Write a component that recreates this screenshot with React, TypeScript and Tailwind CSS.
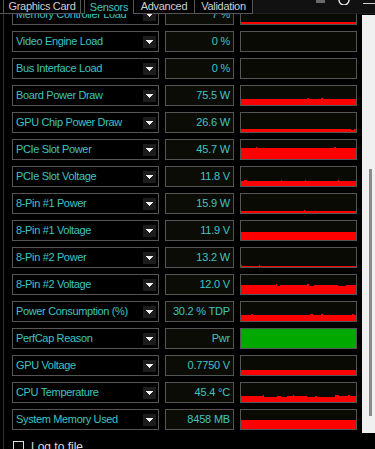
import React from "react";

type Row = {
  label: string;
  value: string;
  graph?: number[];
  green?: boolean;
};

const W = 115;
const H = 19;

function rng(seed: number) {
  let a = seed;
  return () => {
    a |= 0;
    a = (a + 0x6d2b79f5) | 0;
    let t = Math.imul(a ^ (a >>> 15), 1 | a);
    t = (t + Math.imul(t ^ (t >>> 7), 61 | t)) ^ t;
    return ((t ^ (t >>> 14)) >>> 0) / 4294967296;
  };
}

// one sample per pixel column, grouped into short runs
function series(
  seed: number,
  base: number,
  spikeP = 0,
  spikeH = 1,
  dipP = 0,
  dipH = 1,
  run = 4
): number[] {
  const r = rng(seed);
  const out: number[] = [];
  while (out.length < W) {
    const v = r();
    let h = base;
    let w = 1 + Math.floor(r() * run);
    if (v < spikeP) {
      h = base + 1 + Math.floor(r() * spikeH);
      w = 1 + Math.floor(r() * 2);
    } else if (v < spikeP + dipP) {
      h = base - 1 - Math.floor(r() * dipH);
    }
    for (let k = 0; k < w && out.length < W; k++) out.push(Math.max(0, h));
  }
  return out;
}

const gpuChip = series(7, 3);
gpuChip[110] = 2;
gpuChip[111] = 2;
gpuChip[112] = 2;

const rows: Row[] = [
  { label: "Memory Controller Load", value: "7 %", graph: series(1, 2) },
  { label: "Video Engine Load", value: "0 %" },
  { label: "Bus Interface Load", value: "0 %" },
  { label: "Board Power Draw", value: "75.5 W", graph: series(3, 6, 0.12, 1, 0, 1, 8) },
  { label: "GPU Chip Power Draw", value: "26.6 W", graph: gpuChip },
  { label: "PCIe Slot Power", value: "45.7 W", graph: series(11, 11, 0.12, 1, 0.05, 1, 8) },
  { label: "PCIe Slot Voltage", value: "11.8 V", graph: series(13, 5, 0.12, 1, 0, 1, 8) },
  { label: "8-Pin #1 Power", value: "15.9 W", graph: series(17, 2, 0.08, 1, 0, 1, 10) },
  { label: "8-Pin #1 Voltage", value: "11.9 V", graph: series(19, 8, 0.03, 1, 0.02, 1, 12) },
  { label: "8-Pin #2 Power", value: "13.2 W", graph: series(23, 1, 0.1, 1, 0, 1, 10) },
  { label: "8-Pin #2 Voltage", value: "12.0 V", graph: series(29, 9, 0.12, 1, 0.08, 1, 8) },
  { label: "Power Consumption (%)", value: "30.2 % TDP", graph: series(31, 6, 0.15, 1, 0, 1, 6) },
  { label: "PerfCap Reason", value: "Pwr", green: true },
  { label: "GPU Voltage", value: "0.7750 V", graph: series(37, 5) },
  { label: "CPU Temperature", value: "45.4 °C", graph: series(41, 6, 0.15, 1, 0.2, 1, 10) },
  { label: "System Memory Used", value: "8458 MB", graph: series(43, 9) },
];

function Graph({ data, green }: { data?: number[]; green?: boolean }) {
  if (green) return <div className="h-full w-full bg-[#00a800]" />;
  if (!data) return null;
  let d = `M0 ${H}`;
  data.forEach((h, i) => {
    d += ` L${i} ${H - h} L${i + 1} ${H - h}`;
  });
  d += ` L${W} ${H} Z`;
  return (
    <svg width={W} height={H} viewBox={`0 0 ${W} ${H}`} shapeRendering="crispEdges" className="block">
      <path d={d} fill="#ff0000" />
    </svg>
  );
}

function Arrow() {
  return (
    <div className="flex h-[12px] w-[13px] items-center justify-center bg-[#1c1c1c]">
      <svg width="7" height="4" viewBox="0 0 7 4" shapeRendering="crispEdges">
        <path d="M0 0 H7 L3.5 4 Z" fill="#f2f2f2" />
      </svg>
    </div>
  );
}

function SensorRow({ row }: { row: Row }) {
  return (
    <div className="flex h-[21px] gap-[6px]">
      <div className="flex w-[147px] items-center justify-between border border-[#555] bg-black pl-[3px] pr-[2px]">
        <span className="whitespace-nowrap text-[11px] tracking-[-0.35px] text-[#3fc3c3]">{row.label}</span>
        <Arrow />
      </div>
      <div className="flex w-[69px] items-center justify-end border border-[#555] bg-[#0c0c06] pr-[3px]">
        <span className="whitespace-nowrap text-[11px] tracking-[-0.2px] text-[#3fc3c3]">{row.value}</span>
      </div>
      <div className="w-[117px] overflow-hidden border border-[#555] bg-[#0a0a04]">
        <Graph data={row.graph} green={row.green} />
      </div>
    </div>
  );
}

function Tab({ label, active, className }: { label: string; active?: boolean; className: string }) {
  return (
    <div
      className={`flex h-full items-end justify-center border-r border-[#555] pb-[2px] text-[11px] leading-[11px] tracking-[-0.3px] ${
        active ? "bg-black text-[#3fc3c3]" : "border-b bg-black text-[#d0d0d0]"
      } ${className}`}
    >
      <span className="-mb-[1px] whitespace-nowrap">{label}</span>
    </div>
  );
}

export default function App() {
  return (
    <div className="h-[449px] w-[375px] overflow-hidden bg-black font-['Liberation_Sans',Arial,sans-serif]">
      {/* tab strip */}
      <div className="flex h-[14px]">
        <div className="w-[3px] border-b border-[#555]" />
        <Tab label="Graphics Card" className="w-[78px] border-l" />
        <div className="w-[3px] border-b border-[#555]" />
        <Tab label="Sensors" active className="w-[50px] border-l" />
        <Tab label="Advanced" className="w-[61px]" />
        <Tab label="Validation" className="w-[58px]" />
        <div className="flex flex-1 items-start border-b border-[#1e1e1e] bg-[#111]">
          <div className="ml-[63px] h-[3px] w-[9px] bg-[#6a6a6a]" />
          <svg width="12" height="5" viewBox="0 0 12 5" className="ml-[13px]">
            <path d="M1 0 A5 5 0 0 0 11 0" fill="none" stroke="#e0e0e0" strokeWidth="1.5" />
          </svg>
          <div className="ml-[13px] mt-[3px] h-[1px] flex-1 bg-[#d0d0d0]" />
        </div>
      </div>

      <div className="flex h-[435px]">
        <div className="w-[3px]" />
        <div className="w-[1px] bg-[#3a2c2c]" />
        <div className="flex flex-1 flex-col">
          {/* sensor panel */}
          <div className="flex h-[419px] shrink-0">
            <div className="flex-1 overflow-hidden pl-[8px]">
              <div className="-mt-[10px] flex flex-col gap-[6px]">
                {rows.map((r) => (
                  <SensorRow key={r.label} row={r} />
                ))}
              </div>
            </div>
            <div className="mt-[1px] w-[13px] bg-[#f0f0f0]">
              <div className="ml-[7px] mt-[154px] h-[247px] w-[3px] bg-[#8a8a8a]" />
            </div>
          </div>

          {/* log to file */}
          <div className="ml-[9px] mt-[8px] flex shrink-0 items-start gap-[7px]">
            <div className="h-[11px] w-[11px] border border-[#dcdcdc] bg-black" />
            <span className="-mt-[1px] text-[12px] leading-[14px] text-[#dcdcdc]">Log to file</span>
          </div>
        </div>
      </div>
    </div>
  );
}
